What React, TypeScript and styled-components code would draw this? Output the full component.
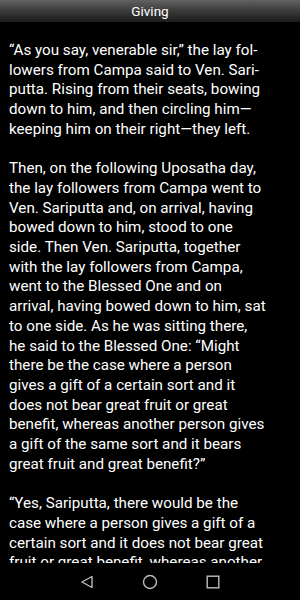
import React from "react";
import styled, { createGlobalStyle } from "styled-components";

const GlobalStyle = createGlobalStyle`
  html, body {
    margin: 0;
    padding: 0;
    background: #000;
  }
  body {
    font-family: Roboto, "Liberation Sans", sans-serif;
  }
`;

const Screen = styled.div`
  width: 300px;
  height: 600px;
  display: flex;
  flex-direction: column;
  background: #000;
  overflow: hidden;
`;

const TitleBar = styled.header`
  height: 22px;
  flex-shrink: 0;
  display: flex;
  align-items: center;
  justify-content: center;
  background: linear-gradient(to bottom, #626262 0%, #3a3a3a 50%, #1c1c1c 100%);
  color: #fff;
  font-size: 13.5px;
  line-height: 22px;
`;

const Reader = styled.main`
  flex: 1;
  overflow: hidden;
  padding: 0 9px;
`;

const Paragraph = styled.p`
  margin: 0;
  padding-top: 19px;
  color: #fff;
  font-size: 15.2px;
  line-height: 19.7px;
  & + & {
    padding-top: 19.7px;
  }
`;

const Line = styled.span`
  display: block;
  white-space: nowrap;
`;

const NavBar = styled.nav`
  height: 37px;
  flex-shrink: 0;
  display: flex;
  align-items: center;
  justify-content: center;
  gap: 47px;
  background: #000;
`;

const NavButton = styled.div`
  width: 16px;
  height: 16px;
  display: flex;
  align-items: center;
  justify-content: center;
`;

// lines as the reader lays them out on the device (the last one runs under the nav bar)
const paragraphs: string[][] = [
  [
    "“As you say, venerable sir,” the lay fol-",
    "lowers from Campa said to Ven. Sari-",
    "putta. Rising from their seats, bowing",
    "down to him, and then circling him—",
    "keeping him on their right—they left.",
  ],
  [
    "Then, on the following Uposatha day,",
    "the lay followers from Campa went to",
    "Ven. Sariputta and, on arrival, having",
    "bowed down to him, stood to one",
    "side. Then Ven. Sariputta, together",
    "with the lay followers from Campa,",
    "went to the Blessed One and on",
    "arrival, having bowed down to him, sat",
    "to one side. As he was sitting there,",
    "he said to the Blessed One: “Might",
    "there be the case where a person",
    "gives a gift of a certain sort and it",
    "does not bear great fruit or great",
    "benefit, whereas another person gives",
    "a gift of the same sort and it bears",
    "great fruit and great benefit?”",
  ],
  [
    "“Yes, Sariputta, there would be the",
    "case where a person gives a gift of a",
    "certain sort and it does not bear great",
    "fruit or great benefit, whereas another",
  ],
];

const App: React.FC = () => {
  return (
    <Screen>
      <GlobalStyle />
      <TitleBar>Giving</TitleBar>
      <Reader>
        {paragraphs.map((lines, i) => (
          <Paragraph key={i}>
            {lines.map((line, j) => (
              <Line key={j}>{line}</Line>
            ))}
          </Paragraph>
        ))}
      </Reader>
      <NavBar>
        <NavButton>
          <svg width="14" height="14" viewBox="0 0 14 14">
            <path d="M12 1.5 L2 7 L12 12.5 Z" fill="none" stroke="#bdbdbd" strokeWidth="1.4" strokeLinejoin="round" />
          </svg>
        </NavButton>
        <NavButton>
          <svg width="16" height="16" viewBox="0 0 16 16">
            <circle cx="8" cy="8" r="6.5" fill="none" stroke="#bdbdbd" strokeWidth="1.4" />
          </svg>
        </NavButton>
        <NavButton>
          <svg width="14" height="14" viewBox="0 0 14 14">
            <rect x="1.2" y="1.2" width="11.6" height="11.6" fill="none" stroke="#bdbdbd" strokeWidth="1.4" />
          </svg>
        </NavButton>
      </NavBar>
    </Screen>
  );
};

export default App;
